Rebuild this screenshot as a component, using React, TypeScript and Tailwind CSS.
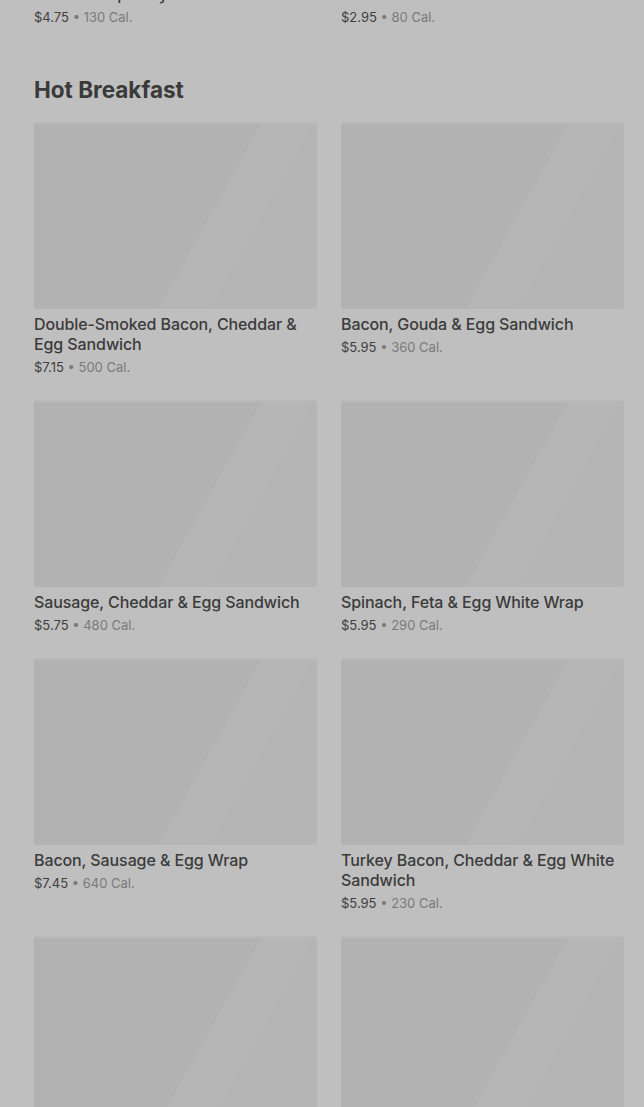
import React from "react";

type Item = { name: string; price: string; cal: number };

const previousRow: Item[] = [
  { name: "Lemon Raspberry Loaf Cake Slice", price: "$4.75", cal: 130 },
  { name: "Petite Scone", price: "$2.95", cal: 80 },
];

const hotBreakfast: Item[] = [
  { name: "Double-Smoked Bacon, Cheddar & Egg Sandwich", price: "$7.15", cal: 500 },
  { name: "Bacon, Gouda & Egg Sandwich", price: "$5.95", cal: 360 },
  { name: "Sausage, Cheddar & Egg Sandwich", price: "$5.75", cal: 480 },
  { name: "Spinach, Feta & Egg White Wrap", price: "$5.95", cal: 290 },
  { name: "Bacon, Sausage & Egg Wrap", price: "$7.45", cal: 640 },
  { name: "Turkey Bacon, Cheddar & Egg White Sandwich", price: "$5.95", cal: 230 },
  { name: "Impossible™ Breakfast Sandwich", price: "$6.45", cal: 420 },
  { name: "Bacon & Gruyère Egg Bites", price: "$5.45", cal: 300 },
];

function ItemMeta({ item }: { item: Item }) {
  return (
    <div className="mt-[3px] text-[13px] leading-5">
      <span className="text-[#404040]">{item.price}</span>
      <span className="text-[#7a7a7a]"> • {item.cal} Cal.</span>
    </div>
  );
}

function MenuCard({ item }: { item: Item }) {
  return (
    <div className="flex flex-col">
      {/* image placeholder with loading shimmer */}
      <div className="h-[187px] w-full rounded-[2px] border-t-2 border-[#b9b9b9] bg-[linear-gradient(119deg,#b2b2b2_0%,#b2b2b2_59%,#b6b6b6_59%,#b6b6b6_72%,#b5b5b5_72%,#b5b5b5_100%)]" />
      <div className="mt-[5px] text-[16px] font-medium leading-5 tracking-[-0.1px] text-[#3b3b3b]">{item.name}</div>
      <ItemMeta item={item} />
    </div>
  );
}

export default function App() {
  return (
    <div className="h-[1107px] overflow-hidden bg-[#bfbfbf] font-['Inter',sans-serif]">
      <div className="-mt-[16px] pl-[34px] pr-[20px]">
        {/* Previous section tail */}
        <div className="grid grid-cols-2 gap-x-6">
          {previousRow.map((item) => (
            <div key={item.name}>
              <div className="text-[16px] font-medium leading-5 tracking-[-0.1px] text-[#3b3b3b]">{item.name}</div>
              <ItemMeta item={item} />
            </div>
          ))}
        </div>

        {/* Hot Breakfast */}
        <h2 className="mt-[49px] text-[22.5px] font-bold leading-7 text-[#3a3a3a]">
          Hot Breakfast
        </h2>
        <div className="mt-[18px] grid grid-cols-2 gap-x-6 gap-y-[23px]">
          {hotBreakfast.map((item) => (
            <MenuCard key={item.name} item={item} />
          ))}
        </div>
      </div>
    </div>
  );
}
